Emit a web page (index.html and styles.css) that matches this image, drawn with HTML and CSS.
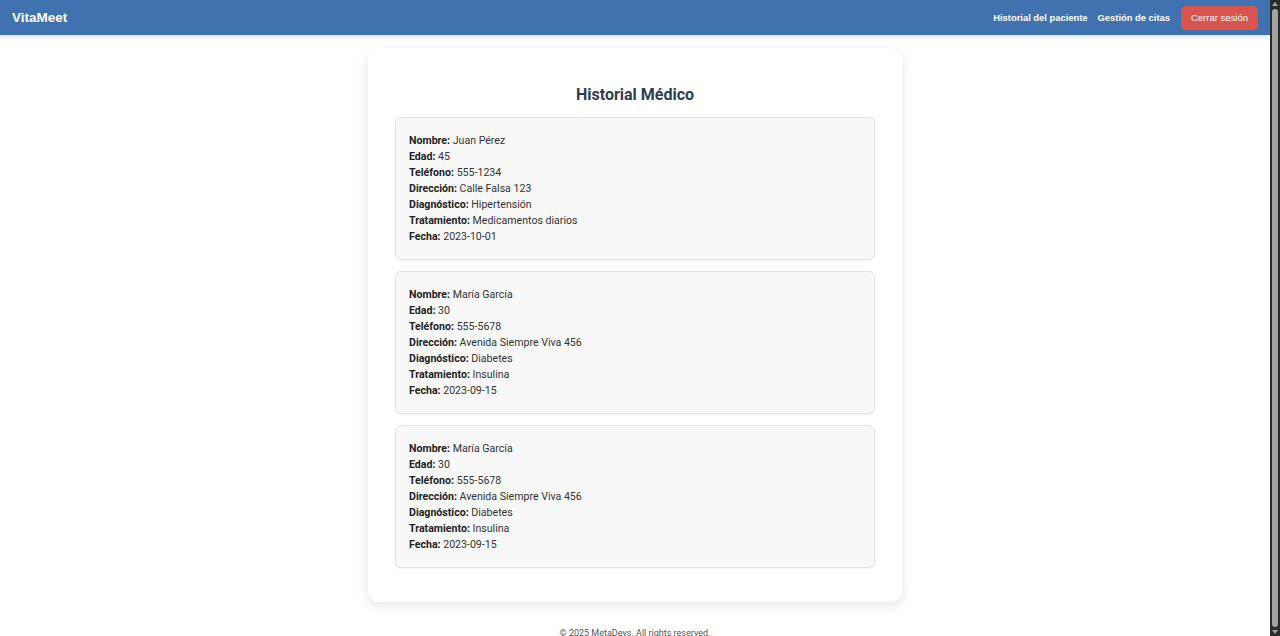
FILE: index.html
```html
<!DOCTYPE html>
<html lang="es">
<head>
<meta charset="utf-8">
<title>VitaMeet - Historial Médico</title>
<link rel="stylesheet" href="styles.css">
</head>
<body>
<header class="navbar">
  <div class="brand">VitaMeet</div>
  <nav class="nav">
    <a class="nav-link" href="#">Historial del paciente</a>
    <a class="nav-link" href="#">Gestión de citas</a>
    <button class="logout">Cerrar sesión</button>
  </nav>
</header>
<main class="main">
  <section class="card">
    <h2 class="title">Historial Médico</h2>
    <div class="records">
      <div class="record">
        <p><strong>Nombre:</strong> Juan Pérez</p>
        <p><strong>Edad:</strong> 45</p>
        <p><strong>Teléfono:</strong> 555-1234</p>
        <p><strong>Dirección:</strong> Calle Falsa 123</p>
        <p><strong>Diagnóstico:</strong> Hipertensión</p>
        <p><strong>Tratamiento:</strong> Medicamentos diarios</p>
        <p><strong>Fecha:</strong> 2023-10-01</p>
      </div>
      <div class="record">
        <p><strong>Nombre:</strong> María García</p>
        <p><strong>Edad:</strong> 30</p>
        <p><strong>Teléfono:</strong> 555-5678</p>
        <p><strong>Dirección:</strong> Avenida Siempre Viva 456</p>
        <p><strong>Diagnóstico:</strong> Diabetes</p>
        <p><strong>Tratamiento:</strong> Insulina</p>
        <p><strong>Fecha:</strong> 2023-09-15</p>
      </div>
      <div class="record">
        <p><strong>Nombre:</strong> María García</p>
        <p><strong>Edad:</strong> 30</p>
        <p><strong>Teléfono:</strong> 555-5678</p>
        <p><strong>Dirección:</strong> Avenida Siempre Viva 456</p>
        <p><strong>Diagnóstico:</strong> Diabetes</p>
        <p><strong>Tratamiento:</strong> Insulina</p>
        <p><strong>Fecha:</strong> 2023-09-15</p>
      </div>
    </div>
  </section>
</main>
<footer class="footer">© 2025 MetaDevs. All rights reserved.</footer>
<div class="scrollbar" aria-hidden="true">
  <span class="arrow arrow-up"></span>
  <span class="thumb"></span>
  <span class="arrow arrow-down"></span>
</div>
</body>
</html>
```
FILE: styles.css
```css
html::-webkit-scrollbar {
  display: none;
}
body {
  margin: 0;
  padding-right: 10px;
  font-family: Roboto, "Liberation Sans", Arial, sans-serif;
  background: #ffffff;
  color: #333333;
}
.navbar {
  height: 35px;
  background: #4172b0;
  display: flex;
  align-items: center;
  justify-content: space-between;
  padding: 0 12px;
  box-shadow: 0 2px 4px rgba(0, 0, 0, 0.12);
}
.brand {
  font-family: "Liberation Sans", Arial, sans-serif;
  font-weight: bold;
  font-size: 13.5px;
  color: #ffffff;
}
.nav {
  display: flex;
  align-items: center;
  gap: 10px;
}
.nav-link {
  font-family: "Liberation Sans", Arial, sans-serif;
  font-weight: bold;
  font-size: 9.4px;
  color: #ffffff;
  text-decoration: none;
}
.logout {
  font-family: "Liberation Sans", Arial, sans-serif;
  font-size: 9.5px;
  color: #ffffff;
  background: #d9534f;
  border: none;
  border-radius: 5px;
  height: 24px;
  padding: 0 10px;
  margin-left: 1px;
}
.main {
  display: flex;
  justify-content: center;
  padding-top: 13px;
}
.card {
  width: 534px;
  box-sizing: border-box;
  background: #ffffff;
  border-radius: 12px;
  padding: 27px 27px 34px;
  box-shadow: 0 4px 14px rgba(0, 0, 0, 0.1);
}
.title {
  margin: 10px 0 12px;
  text-align: center;
  font-size: 16px;
  line-height: 20px;
  font-weight: bold;
  color: #2c3e50;
}
.records {
  display: flex;
  flex-direction: column;
  gap: 11px;
}
.record {
  background: #f8f8f8;
  border: 1px solid #e3e3e3;
  border-radius: 6px;
  padding: 15px 13px 14px;
  box-shadow: 0 1px 3px rgba(0, 0, 0, 0.05);
}
.record p {
  margin: 0;
  font-size: 10.6px;
  line-height: 16px;
  color: #333333;
}
.record strong {
  color: #222222;
}
.footer {
  text-align: center;
  font-size: 9px;
  color: #555555;
  padding-top: 26px;
  padding-bottom: 10px;
}
.scrollbar {
  position: fixed;
  top: 0;
  right: 0;
  width: 10px;
  height: 100%;
  background: #2b2b2b;
  display: flex;
  flex-direction: column;
  align-items: center;
  padding: 2px 0;
  box-sizing: border-box;
}
.thumb {
  flex: 1;
  width: 6px;
  margin: 3px 0;
  background: #a3a3a3;
  border-radius: 3px;
}
.arrow {
  width: 0;
  height: 0;
  border-left: 3px solid transparent;
  border-right: 3px solid transparent;
}
.arrow-up {
  border-bottom: 4px solid #a3a3a3;
}
.arrow-down {
  border-top: 4px solid #a3a3a3;
}
```
